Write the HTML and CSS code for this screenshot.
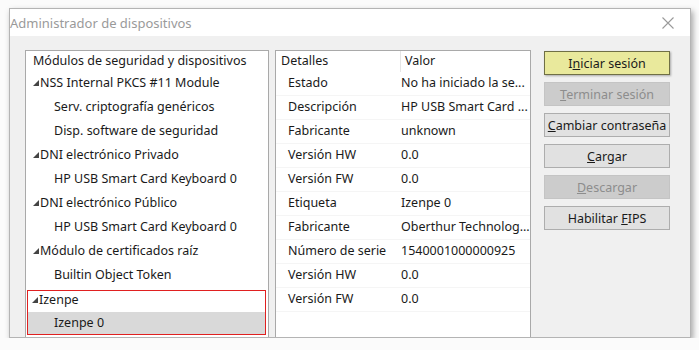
FILE: index.html
```html
<!DOCTYPE html>
<html lang="es">
<head>
  <meta charset="UTF-8" />
  <title>Administrador de dispositivos</title>
  <link rel="stylesheet" href="styles.css">
</head>
<body>
  <div class="window">
    <div class="titlebar">
      <span class="title">Administrador de dispositivos</span>
      <svg class="close" width="12" height="12" viewBox="0 0 12 12"><path d="M0.5 0.5L11.5 11.5M11.5 0.5L0.5 11.5" stroke="#9a9a9a" stroke-width="1.1"/></svg>
    </div>
    <div class="content">
      <div class="panel tree">
        <div class="head">Módulos de seguridad y dispositivos</div>
        <div class="row top"><span class="tri"></span>NSS Internal PKCS #11 Module</div>
        <div class="row child">Serv. criptografía genéricos</div>
        <div class="row child">Disp. software de seguridad</div>
        <div class="row top"><span class="tri"></span>DNI electrónico Privado</div>
        <div class="row child">HP USB Smart Card Keyboard 0</div>
        <div class="row top"><span class="tri"></span>DNI electrónico Público</div>
        <div class="row child">HP USB Smart Card Keyboard 0</div>
        <div class="row top"><span class="tri"></span>Módulo de certificados raíz</div>
        <div class="row child">Builtin Object Token</div>
        <div class="marked">
          <div class="row top"><span class="tri"></span>Izenpe</div>
          <div class="row child selected">Izenpe 0</div>
        </div>
      </div>
      <div class="panel details">
        <div class="drow head"><span class="key">Detalles</span><span class="val">Valor</span></div>
        <div class="drow"><span class="key">Estado</span><span class="val">No ha iniciado la se...</span></div>
        <div class="drow"><span class="key">Descripción</span><span class="val">HP USB Smart Card ...</span></div>
        <div class="drow"><span class="key">Fabricante</span><span class="val">unknown</span></div>
        <div class="drow"><span class="key">Versión HW</span><span class="val">0.0</span></div>
        <div class="drow"><span class="key">Versión FW</span><span class="val">0.0</span></div>
        <div class="drow"><span class="key">Etiqueta</span><span class="val">Izenpe 0</span></div>
        <div class="drow"><span class="key">Fabricante</span><span class="val">Oberthur Technolog...</span></div>
        <div class="drow"><span class="key">Número de serie</span><span class="val">1540001000000925</span></div>
        <div class="drow"><span class="key">Versión HW</span><span class="val">0.0</span></div>
        <div class="drow"><span class="key">Versión FW</span><span class="val">0.0</span></div>
      </div>
      <div class="buttons">
        <button class="primary">I<u>n</u>iciar sesión</button>
        <button disabled><u>T</u>erminar sesión</button>
        <button><u>C</u>ambiar contraseña</button>
        <button><u>C</u>argar</button>
        <button disabled><u>D</u>escargar</button>
        <button>Habilitar <u>F</u>IPS</button>
      </div>
    </div>
  </div>
</body>
</html>
```

FILE: styles.css
```css
* {
  box-sizing: border-box;
}

body {
  margin: 0;
  background: #fbfbfb;
  font-family: "Noto Sans", "Open Sans", sans-serif;
  font-size: 12.5px;
  color: #1a1a1a;
}

.window {
  margin: 8px 0 0 9px;
  width: 682px;
  height: 330px;
  border: 1px solid #b4b4b4;
  background: #f0f0f0;
  box-shadow: 2px 3px 6px rgba(0,0,0,0.35);
  display: flex;
  flex-direction: column;
}

.titlebar {
  height: 27px;
  background: #fff;
  display: flex;
  align-items: center;
  justify-content: space-between;
  padding: 0 16px 0 0;
}

.title {
  color: #9a9a9a;
  font-size: 13px;
}

.content {
  flex: 1;
  display: flex;
  padding: 14px 0 0 15px;
  overflow: hidden;
}

.panel {
  background: #fff;
  border: 1px solid #a9a9a9;
  border-bottom: none;
}

.tree {
  width: 244px;
  padding: 0 2px;
}

.head {
  height: 21px;
  line-height: 19px;
  padding-left: 5px;
}

.row {
  height: 24px;
  line-height: 22px;
  white-space: nowrap;
}

.row.top {
  padding-left: 5px;
}

.row.child {
  padding-left: 26px;
}

.tri {
  display: inline-block;
  width: 0;
  height: 0;
  border-left: 6px solid transparent;
  border-bottom: 6px solid #444;
  margin-right: 1px;
  vertical-align: 1px;
}

.marked {
  border: 1.5px solid #e02020;
  margin: 2px 0 0 -1px;
  width: 239px;
}

.marked .row.top {
  padding-left: 4px;
  height: 21px;
  line-height: 17px;
}

.selected {
  background: #d9d9d9;
  height: 22px;
}

.details {
  width: 256px;
  margin-left: 6px;
}

.drow {
  display: flex;
  height: 24px;
  line-height: 22px;
  border-bottom: 1px solid #f5f5f5;
  white-space: nowrap;
}

.drow.head {
  height: 21px;
  line-height: 19px;
  padding-left: 0;
  border-bottom: none;
}

.key {
  width: 125px;
  padding-left: 12px;
}

.drow.head .key {
  padding-left: 5px;
  border-right: 1px solid #e5e5e5;
}

.val {
  padding-left: 0;
}

.drow.head .val {
  padding-left: 4px;
}

.buttons {
  margin-left: 13px;
  width: 126px;
  display: flex;
  flex-direction: column;
  gap: 7px;
  padding-top: 1px;
}

button {
  height: 24px;
  font-family: inherit;
  font-size: 12.5px;
  color: #1a1a1a;
  background: #e1e1e1;
  border: 1px solid #adadad;
  padding: 0;
}

button.primary {
  background: #e9e99c;
  border: 1px solid #6f6f45;
  box-shadow: 1px 1px 2px rgba(0,0,0,0.3);
}

button:disabled {
  background: #cccccc;
  border-color: #c4c4c4;
  color: #8d8d8d;
}
```
